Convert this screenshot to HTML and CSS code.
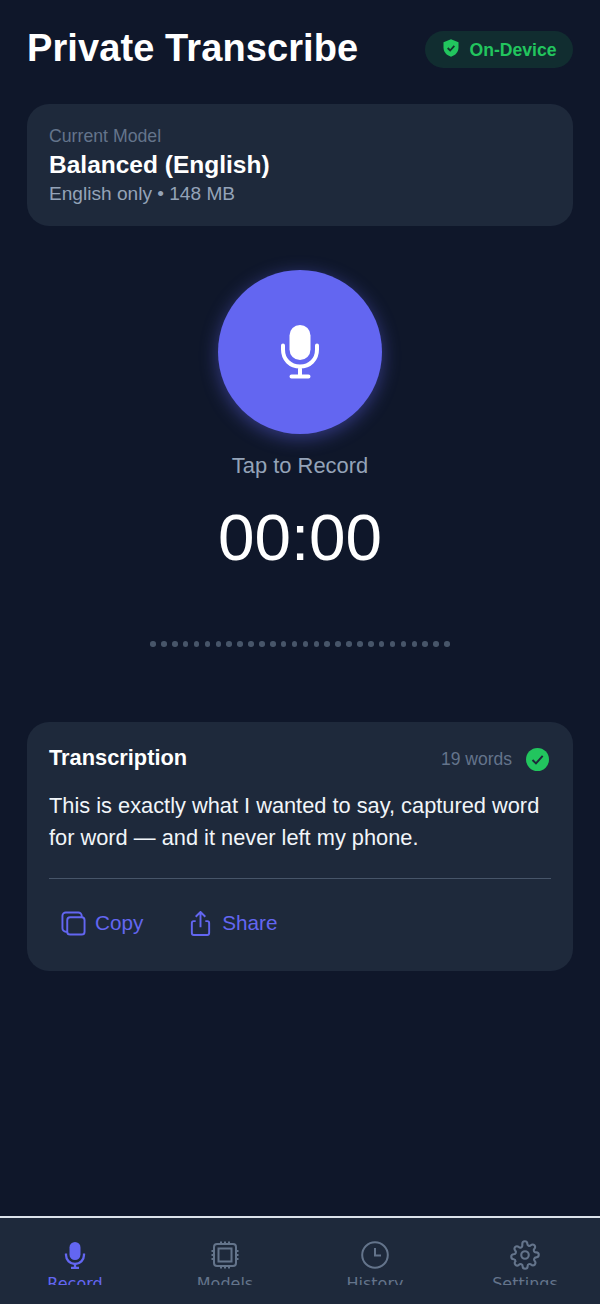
FILE: index.html
```html
<!DOCTYPE html>
<html lang="en">
<head>
<meta charset="utf-8">
<title>Private Transcribe</title>
<link rel="stylesheet" href="styles.css">
</head>
<body>
<div class="app">
  <main class="main">
    <header class="header">
      <h1 class="title">Private Transcribe</h1>
      <div class="badge">
        <svg class="badge-icon" viewBox="0 0 24 24"><path class="shield" d="M12 1.500 21 5v6.500c0 5.300-3.700 9.600-9 11-5.300-1.400-9-5.700-9-11V5z"/><path class="shield-check" d="m8 12 3 3 5-5.500"/></svg>
        <span>On-Device</span>
      </div>
    </header>
    <section class="card model-card">
      <div class="model-label">Current Model</div>
      <div class="model-name">Balanced (English)</div>
      <div class="model-meta">English only • 148 MB</div>
    </section>
    <section class="recorder">
      <button class="mic-button" type="button" aria-label="Record">
        <svg class="mic-icon" viewBox="0 0 38 54"><rect x="8.500" y="0" width="21" height="35" rx="10.500" class="fill"/><path class="stroke" d="M2 20.500v4C2 34.500 9 41.500 19 41.500s17-7 17-17v-4M19 41.500V51M10.500 51.500h17"/></svg>
      </button>
      <div class="tap-label">Tap to Record</div>
      <div class="timer">00:00</div>
      <div class="dots">
        <i></i><i></i><i></i><i></i><i></i><i></i><i></i><i></i><i></i><i></i><i></i><i></i><i></i><i></i>
        <i></i><i></i><i></i><i></i><i></i><i></i><i></i><i></i><i></i><i></i><i></i><i></i><i></i><i></i>
      </div>
    </section>
    <section class="card result-card">
      <div class="result-head">
        <h2 class="result-title">Transcription</h2>
        <div class="result-meta">
          <span class="word-count">19 words</span>
          <svg class="ok-icon" viewBox="0 0 24 24"><circle cx="12" cy="12" r="12" class="ok-bg"/><path class="ok-check" d="m6.800 12.500 3.600 3.600 7-7.800"/></svg>
        </div>
      </div>
      <p class="result-text">This is exactly what I wanted to say, captured word for word — and it never left my phone.</p>
      <div class="actions">
        <button class="action" type="button">
          <svg class="action-icon" viewBox="0 0 26 26"><rect x="6.500" y="6.500" width="18" height="18" rx="3"/><path d="M6.500 21.500H5a3.500 3.500 0 0 1-3.500-3.500V5A3.500 3.500 0 0 1 5 1.500h13A3.500 3.500 0 0 1 21.500 5v1.500"/></svg>
          <span>Copy</span>
        </button>
        <button class="action" type="button">
          <svg class="action-icon" viewBox="0 0 26 26"><path d="M8 10.500H6a2 2 0 0 0-2 2V23a2 2 0 0 0 2 2h14a2 2 0 0 0 2-2V12.500a2 2 0 0 0-2-2h-2M13 17V1.500M8 6l5-5 5 5"/></svg>
          <span>Share</span>
        </button>
      </div>
    </section>
  </main>
  <nav class="nav">
    <div class="nav-item active">
      <svg class="nav-icon" viewBox="0 0 28 28"><rect x="8.500" y="1" width="11" height="18" rx="5.500" class="fill-cur"/><path class="nav-mic-stroke" d="M5 12.500v1.500c0 5 4 9 9 9s9-4 9-9v-1.500M14 23v4M10 27h8"/></svg>
      <span class="nav-label">Record</span>
    </div>
    <div class="nav-item">
      <svg class="nav-icon" viewBox="0 0 28 28"><rect x="3" y="3" width="22" height="22" rx="3"/><rect x="7.500" y="7.500" width="13" height="13"/><path d="M10 0.500v2.500M14 0.500v2.500M18 0.500v2.500M10 25v2.500M14 25v2.500M18 25v2.500M0.500 10H3M0.500 14H3M0.500 18H3M25 10h2.500M25 14h2.500M25 18h2.500"/></svg>
      <span class="nav-label">Models</span>
    </div>
    <div class="nav-item">
      <svg class="nav-icon" viewBox="0 0 28 28"><circle cx="14" cy="14" r="12.800"/><path d="M14 7v7.500h6"/></svg>
      <span class="nav-label">History</span>
    </div>
    <div class="nav-item">
      <svg class="nav-icon gear" viewBox="0 0 24 24"><circle cx="12" cy="12" r="3"/><path d="M19.400 15a1.650 1.650 0 0 0 .33 1.820l.06.06a2 2 0 1 1-2.830 2.830l-.06-.06a1.650 1.650 0 0 0-2.800 1.170V21a2 2 0 1 1-4 0v-.09a1.650 1.650 0 0 0-2.880-1.110l-.06.06a2 2 0 1 1-2.830-2.830l.06-.06A1.650 1.650 0 0 0 3 15.400H3a2 2 0 1 1 0-4h.09a1.650 1.650 0 0 0 1.110-2.880l-.06-.06a2 2 0 1 1 2.830-2.830l.06.06A1.650 1.650 0 0 0 9.850 4.400V3a2 2 0 1 1 4 0v.09a1.650 1.650 0 0 0 2.800 1.170l.06-.06a2 2 0 1 1 2.830 2.830l-.06.06a1.650 1.650 0 0 0 1.170 2.800H21a2 2 0 1 1 0 4h-.09a1.650 1.650 0 0 0-1.510 1z"/></svg>
      <span class="nav-label">Settings</span>
    </div>
  </nav>
</div>
</body>
</html>
```
FILE: styles.css
```css
* { box-sizing: border-box; }
html, body { margin: 0; padding: 0; }
body {
  background: #0f172a;
  font-family: "Liberation Sans", Arial, sans-serif;
  color: #fff;
}
.app {
  width: 600px;
  height: 1304px;
  display: flex;
  flex-direction: column;
  overflow: hidden;
}
.main {
  flex: 1;
  padding: 25px 27px 0;
}
.header {
  display: flex;
  align-items: center;
  justify-content: space-between;
  height: 46px;
  margin-bottom: 33px;
}
.title {
  margin: 0;
  font-size: 38px;
  line-height: 44px;
  font-weight: 700;
  letter-spacing: 0.1px;
}
.badge {
  display: flex;
  align-items: center;
  gap: 8px;
  height: 37px;
  margin-top: 3px;
  padding: 2px 16.500px 0;
  border-radius: 19px;
  background: rgba(34, 197, 94, 0.13);
  color: #22c55e;
  font-size: 17.600px;
  font-weight: 700;
}
.badge-icon { width: 20px; height: 20px; margin-top: -5px; }
.shield { fill: #22c55e; }
.shield-check { fill: none; stroke: #14352f; stroke-width: 2.200; }
.card {
  background: #1e293b;
  border-radius: 22px;
}
.model-card {
  height: 122px;
  padding: 21px 22px;
}
.model-label { font-size: 17.700px; line-height: 22px; color: #64748b; }
.model-name { font-size: 24.500px; line-height: 30px; font-weight: 700; margin-top: 3px; }
.model-meta { font-size: 19.100px; line-height: 26px; margin-top: 1px; color: #94a3b8; }
.recorder {
  display: flex;
  flex-direction: column;
  align-items: center;
}
.mic-button {
  width: 164px;
  height: 164px;
  margin-top: 44px;
  padding: 0;
  border: 0;
  border-radius: 50%;
  background: #6366f1;
  box-shadow: 0 4px 18px rgba(99, 102, 241, 0.45);
  display: flex;
  align-items: center;
  justify-content: center;
}
.mic-icon { width: 38px; height: 54px; }
.fill { fill: #fff; }
.stroke { fill: none; stroke: #fff; stroke-width: 4; stroke-linecap: round; }
.tap-label {
  margin-top: 18px;
  font-size: 21.900px;
  line-height: 28px;
  color: #94a3b8;
}
.timer {
  margin-top: 19px;
  font-size: 65.600px;
  line-height: 78px;
}
.dots {
  display: flex;
  gap: 5.400px;
  margin-top: 64px;
  height: 6px;
}
.dots i {
  width: 5.500px;
  height: 5.500px;
  border-radius: 50%;
  background: #475569;
}
.result-card {
  height: 249px;
  margin-top: 75px;
  padding: 21px 22px;
}
.result-head {
  display: flex;
  align-items: center;
  justify-content: space-between;
  height: 30px;
}
.result-title { margin: 0; font-size: 21.800px; line-height: 28px; font-weight: 700; }
.result-meta { display: flex; align-items: center; gap: 14px; margin-right: 2px; }
.word-count { font-size: 17.500px; margin-top: 2px; color: #64748b; }
.ok-icon { width: 23px; height: 23px; margin-top: 2px; }
.ok-bg { fill: #22c55e; }
.ok-check { fill: none; stroke: #1e293b; stroke-width: 2; }
.result-text {
  margin: 17px 0 0;
  font-size: 21.800px;
  line-height: 32px;
  color: #f1f5f9;
}
.actions {
  display: flex;
  gap: 21px;
  margin-top: 24px;
  padding-top: 23px;
  border-top: 1.500px solid #475569;
}
.action {
  display: flex;
  align-items: center;
  gap: 9px;
  padding: 0 12px;
  height: 42px;
  border: 0;
  background: none;
  color: #6366f1;
  font: inherit;
  font-size: 20.700px;
}
.action-icon {
  width: 25px;
  height: 25px;
  fill: none;
  stroke: currentColor;
  stroke-width: 2;
}
.nav {
  height: 88px;
  background: #1e293b;
  border-top: 2px solid #dbe2ea;
  display: grid;
  grid-template-columns: repeat(4, 1fr);
}
.nav-item {
  display: flex;
  flex-direction: column;
  align-items: center;
  height: 67px;
  padding-top: 23px;
  gap: 5px;
  overflow: hidden;
  color: #64748b;
}
.nav-item.active { color: #6366f1; }
.nav-icon {
  width: 28px;
  height: 28px;
  flex: none;
  fill: none;
  stroke: currentColor;
  stroke-width: 2;
}
.nav-mic-stroke { stroke-width: 2.300; }
.nav-icon.gear {
  width: 30px;
  height: 30px;
  margin: -1px 0;
  stroke-width: 1.700;
}
.fill-cur { fill: currentColor; stroke: none; }
.nav-label {
  font-family: "DejaVu Sans", sans-serif;
  font-size: 16px;
  line-height: 20px;
}
```
